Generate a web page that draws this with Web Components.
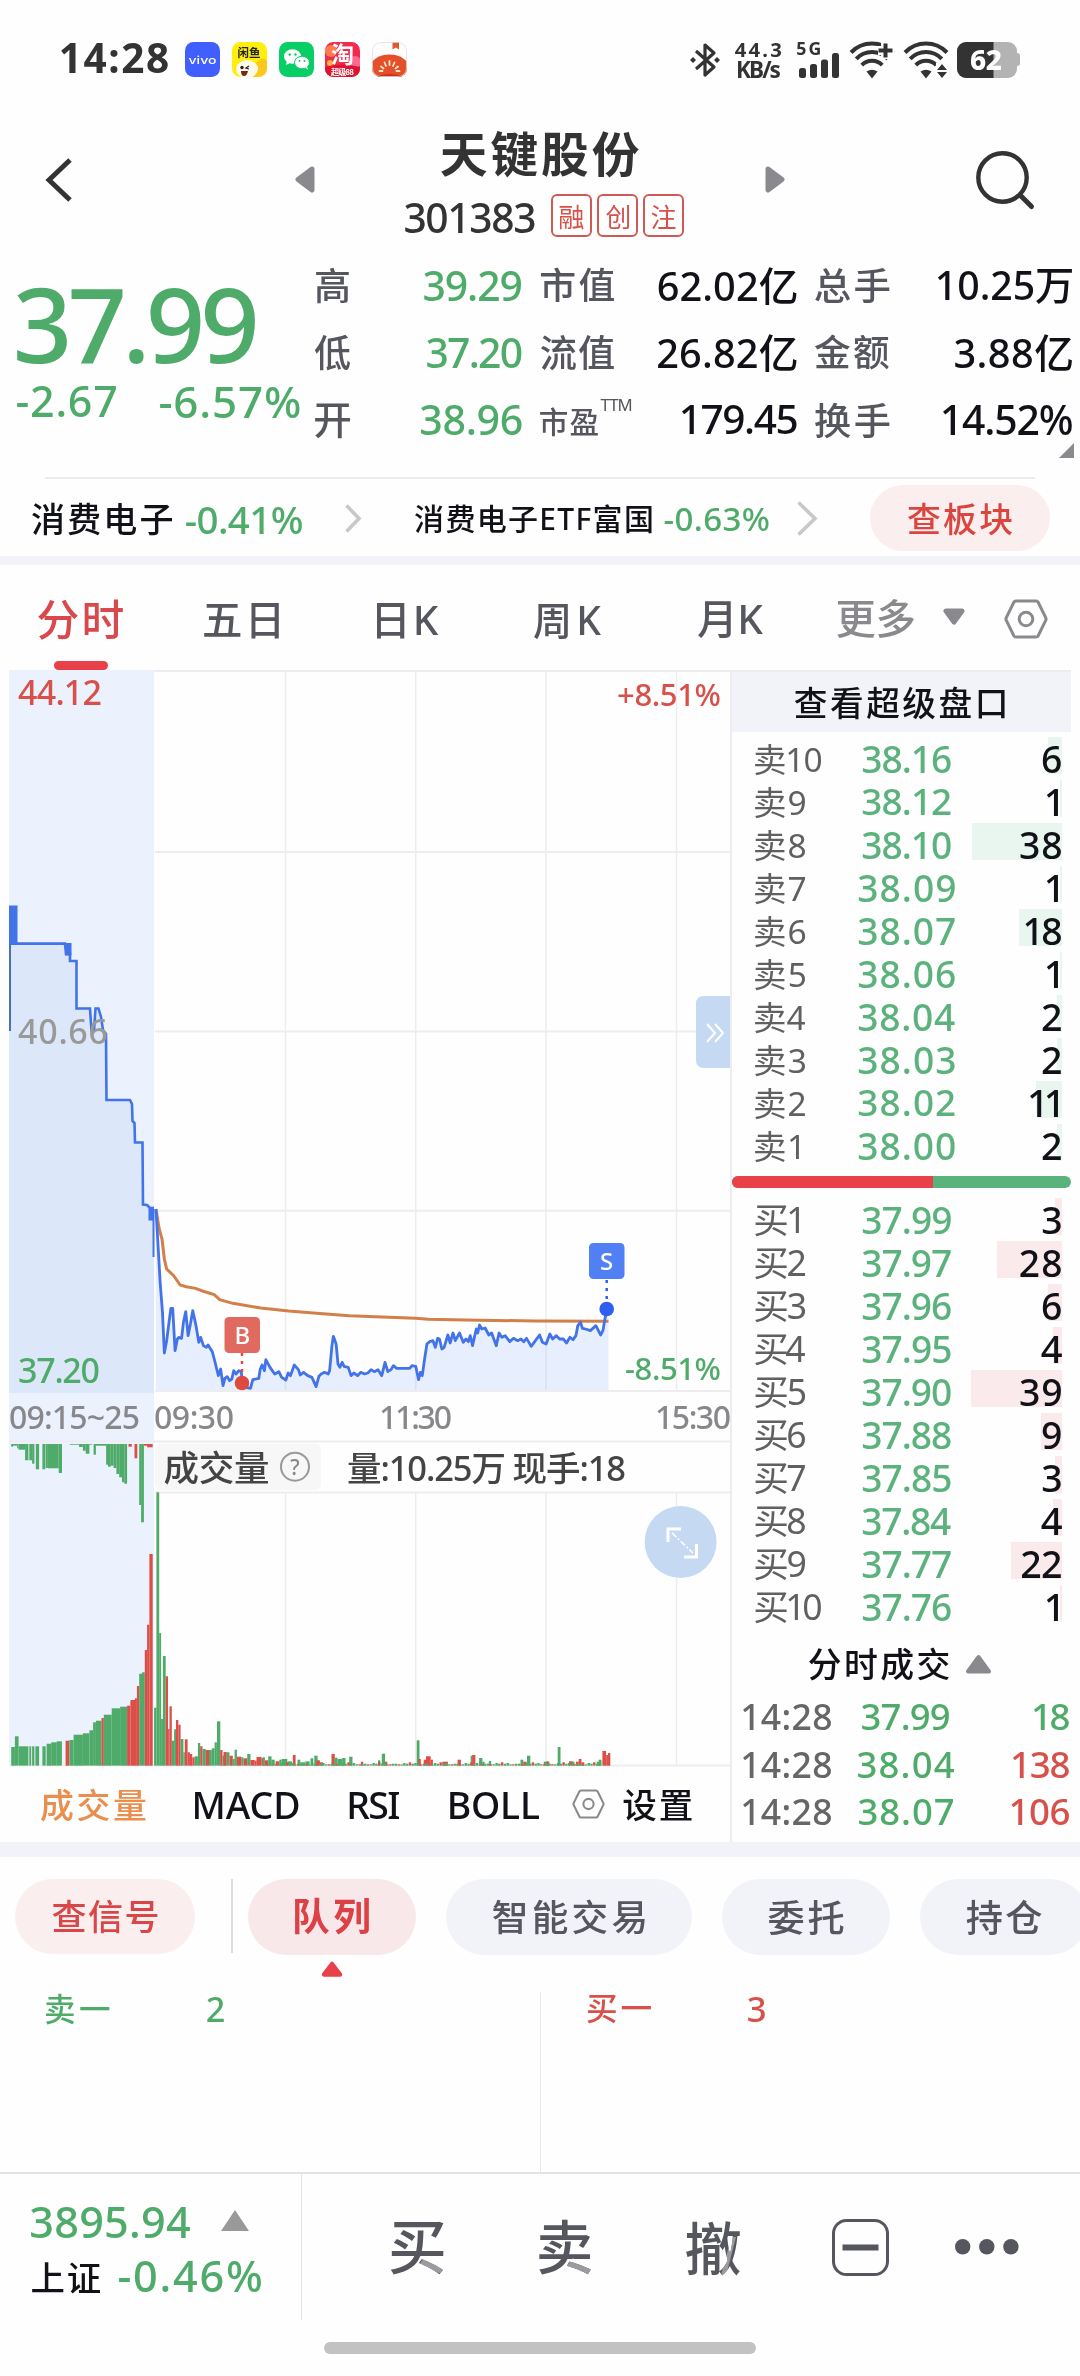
<!DOCTYPE html>
<html lang="zh-CN">
<head>
<meta charset="utf-8">
<title>天键股份 301383</title>
<style>
html,body{margin:0;padding:0;background:#fefefe}
body{width:1080px;height:2376px;overflow:hidden;font-family:"Noto Sans","Noto Sans CJK SC",sans-serif;font-weight:500;color:#333;
--up:#d8504a;--down:#4fab69;--ink:#111118;--label:#55565e;--band:#f2f3f8}
</style>
</head>
<body>
<quote-app></quote-app>
<script>
const FAM = '"Noto Sans","Noto Sans CJK SC",sans-serif';
const measure = document.createElement('canvas').getContext('2d');

/* Text whose box is exactly its ink: w and h give the size, spacing adapts. */
class InkText extends HTMLElement {
  connectedCallback() {
    if (this.shadowRoot) return;
    const w = +this.getAttribute('w'), h = +this.getAttribute('h');
    const wt = this.getAttribute('wt') || 500;
    const s = this.textContent, n = [...s].length;
    measure.font = `${wt} 200px ${FAM}`;
    const m = measure.measureText(s);
    const k = h / (m.actualBoundingBoxAscent + m.actualBoundingBoxDescent);
    const fs = 200 * k;
    const inkW = (m.actualBoundingBoxLeft + m.actualBoundingBoxRight) * k;
    const ls = n > 1 ? (w - inkW) / (n - 1) : 0;
    const base = h / 2 + (m.fontBoundingBoxAscent - m.fontBoundingBoxDescent) * k / 2;
    const up = h - m.actualBoundingBoxDescent * k - base;
    const left = m.actualBoundingBoxLeft * k + (n > 1 ? 0 : (w - inkW) / 2);
    this.attachShadow({mode: 'open'}).innerHTML = `<style>
      :host{display:block;flex:none;width:${w}px;height:${h}px;white-space:pre}
      span{display:block;width:max-content;height:${h}px;line-height:${h}px;font-family:${FAM};font-weight:${wt};font-size:${fs}px;
      letter-spacing:${ls}px;margin-left:${left}px;transform:translateY(${up}px)}
      </style><span><slot></slot></span>`;
  }
}
customElements.define('ink-text', InkText);

/* A flex row: items [text | html, x, y, w, h, style, weight]; gaps become margins. */
const row = (x0, y0, items) => {
  let x = x0;
  return items.map(([c, ix, iy, w, h, st = '', wt]) => {
    const m = `margin-left:${(ix - x).toFixed(1)}px;margin-top:${(iy - y0).toFixed(1)}px;${st}`;
    x = ix + w;
    return c[0] === '<'
      ? `<div style="flex:none;width:${w}px;height:${h}px;${m}">${c}</div>`
      : `<ink-text w="${w}" h="${h}" ${wt ? `wt="${wt}"` : ''} style="${m}">${c}</ink-text>`;
  }).join('');
};
const define = (name, css, html) => customElements.define(name, class extends HTMLElement {
  connectedCallback() {
    if (this.shadowRoot) return;
    this.attachShadow({mode: 'open'}).innerHTML =
      `<style>:host{display:block;box-sizing:border-box}*{box-sizing:border-box}svg{display:block;overflow:visible}.r{display:flex;align-items:flex-start}${css}</style>` +
      (typeof html === 'function' ? html(this) : html);
  }
});
const UP = 'color:var(--up)', DN = 'color:var(--down)', INK = 'color:var(--ink)', LB = 'color:var(--label)';

/* ---------- status bar ---------- */
const app = (bg, inner) => `<svg width="35" height="35" viewBox="0 0 35 35"><defs><clipPath id="c"><rect width="35" height="35" rx="8.5"/></clipPath></defs><g clip-path="url(#c)"><rect width="35" height="35" fill="${bg}"/>${inner}</g></svg>`;
const cjk = 'font-family="Noto Sans CJK SC"';
const icons = [
  app('#415fff', `<text x="17.5" y="21.5" font-family="Inter" font-size="11" font-weight="500" fill="#fff" text-anchor="middle" textLength="28" lengthAdjust="spacingAndGlyphs">vivo</text>`),
  app('#ffee0a', `<path d="M24 21q7-8 11-2v16H10l-7-7q3-6 9-4z" fill="#fdc81e"/><ellipse cx="15" cy="27" rx="11" ry="9" fill="#fffbe8"/><text x="17" y="15" ${cjk} font-size="11.5" font-weight="700" fill="#222" text-anchor="middle">闲鱼</text><circle cx="10" cy="25.500" r="1.700" fill="#222"/><path d="M17 24l-3 2 3 1" stroke="#222" stroke-width="1.300" fill="none"/><path d="M9 29h7q-1 5-4 5t-3-5z" fill="#7b2418"/>`),
  app('#07cf66', `<ellipse cx="13.500" cy="14.500" rx="8.500" ry="7.300" fill="#fff"/><path d="M8 19l-1 4 4-2z" fill="#fff"/><ellipse cx="23" cy="20.500" rx="7.500" ry="6.300" fill="#fff" stroke="#07cf66"/><path d="M26 25l3 3-1-4z" fill="#fff"/><g fill="#07cf66"><circle cx="10.700" cy="12.500" r="1.200"/><circle cx="16.500" cy="12.500" r="1.200"/><circle cx="20.500" cy="19" r="1"/><circle cx="25.500" cy="19" r="1"/></g>`),
  app('#f02b4d', `<circle cx="6" cy="9" r="6" fill="#ff7a4e"/><circle cx="30" cy="20" r="6" fill="#ff6a8e"/><circle cx="5" cy="21" r="3" fill="#ffb03a"/><path d="M0 25q17-5 35 0v10H0z" fill="#dc1430"/><text x="17.500" y="20.500" ${cjk} font-size="23" font-weight="700" fill="#fff" text-anchor="middle">淘</text><text x="17.500" y="33" ${cjk} font-size="8" font-weight="700" fill="#fff" text-anchor="middle" textLength="23">超级88</text>`),
  app('#fffefc', `<path d="M20.500 0h6.500v7.500l-3.200-2-3.300 2z" fill="#e0582f"/><ellipse cx="17.500" cy="27" rx="20" ry="14.500" fill="#e5502a"/><path d="M3 35q14-6 29 0z" fill="#c8301c"/><g stroke="#ffe8c8" stroke-width="1.800" stroke-linecap="round"><path d="M17.500 19v4M12.500 20.500l1.500 3.500M22.500 20.500l-1.500 3.500M9 24.500l2.500 2M26 24.500l-2.500 2M7.500 29h3M27.500 29h-3"/></g><rect x=".5" y=".5" width="34" height="34" rx="8" fill="none" stroke="#ddd" stroke-width=".8"/>`)];
const arcs = `<g fill="none" stroke="#333" stroke-width="4"><path d="M1 10.500a29 29 0 0 1 42 0"/><path d="M6.200 16.800a21.500 21.500 0 0 1 31.600 0"/><path d="M11.800 23.200a14 14 0 0 1 20.400 0"/></g><path d="M16.500 29.500q5.500-3.500 11 0l-5.500 7z" fill="#333"/>`;
define('status-bar', ':host{height:118px}.r{padding-top:42px}', `<div class="r">${row(0, 42, [
  ['14:28', 61, 44, 107, 30, '', 700],
  [icons[0], 185, 42, 35, 35], [icons[1], 232, 42, 35, 35], [icons[2], 278.5, 42, 35, 35], [icons[3], 325, 42, 35, 35], [icons[4], 372, 42, 35, 35],
  [`<svg width="30" height="36" viewBox="0 0 30 36"><path d="M6 9l18 16-9 8V3l9 8L6 27" fill="none" stroke="#333" stroke-width="3.200" stroke-linejoin="round"/><path d="M0 18l3-3 3 3-3 3zM24 18l3-3 3 3-3 3z" fill="#333"/></svg>`, 689.5, 42, 30, 36],
  [`<div><ink-text w="46" h="15" wt="700">44.3</ink-text><ink-text w="42" h="16.500" wt="700" style="margin:5.500px 0 0 3px">KB/s</ink-text></div>`, 735, 42.500, 46, 36],
  [`<div><ink-text w="23" h="13" wt="700">5G</ink-text></div>`, 797, 43, 23, 13],
  [`<svg width="40" height="26" viewBox="0 0 40 26" fill="#333"><rect y="16" width="7" height="10" rx="2.500"/><rect x="11" y="12" width="7" height="14" rx="2.500"/><rect x="22" y="7.500" width="7" height="18.500" rx="2.500"/><rect x="33" y="1" width="7" height="25" rx="2.500"/></svg>`, 799, 52, 40, 26],
  [`<svg width="44" height="36" viewBox="0 0 44 36">${arcs}<path d="M28 8.500h16M35.500 1v16" stroke="#fefefe" stroke-width="9"/><path d="M28.500 8.500h14M35.500 1.500v14" stroke="#333" stroke-width="4"/></svg>`, 849.5, 42, 44, 36],
  [`<svg width="44" height="36" viewBox="0 0 44 36">${arcs}<path d="M32 21h12v16H32z" fill="#fefefe"/><path d="M33 28l5-6 5 6zM33 30l5 6 5-6z" fill="#333"/></svg>`, 903.5, 42, 44, 36],
  [`<svg width="63" height="36" viewBox="0 0 63 36"><defs><clipPath id="b"><rect width="60" height="36" rx="9"/></clipPath></defs><rect x="57" y="11" width="6" height="13" rx="3" fill="#b3b3b3"/><g clip-path="url(#b)"><rect width="60" height="36" fill="#b3b3b3"/><rect width="36.500" height="36" fill="#333"/></g><text x="13" y="27.500" font-family="Noto Sans" font-size="28" font-weight="800" fill="#fff" textLength="32">62</text></svg>`, 957, 42, 63, 36],
])}</div>`);

/* ---------- header ---------- */
const badge = c => `<div class="bd"><ink-text w="24" h="24" wt="400">${c}</ink-text></div>`;
define('stock-header', `:host{height:144px;display:flex;align-items:flex-start}.c{width:233px;margin-left:90px}
.bd{width:41px;height:43px;border:2px solid #cf5a54;border-radius:6px;color:var(--up);padding:8.500px 0 0 6.500px}`, `
<svg width="27" height="44" viewBox="0 0 27 44" style="margin:40px 0 0 45px"><path d="M25 2L4 22l21 20" fill="none" stroke="#333" stroke-width="5"/></svg>
<svg width="20" height="27" viewBox="0 0 20 27" style="margin:48px 0 0 223px"><path d="M17 3L3 13.500 17 24z" fill="#8a8a8e" stroke="#8a8a8e" stroke-width="5" stroke-linejoin="round"/></svg>
<div class="c"><ink-text w="198" h="46" wt="700" style="margin:13px 0 0 36px">天键股份</ink-text>
<div class="r" style="margin-top:17px">${row(405, 194, [['301383', 405, 203, 129.5, 30, 'color:#333'], [badge('融'), 551, 194, 41, 43], [badge('创'), 597, 194, 41, 43], [badge('注'), 643, 194, 41, 43]])}</div></div>
<svg width="20" height="27" viewBox="0 0 20 27" style="margin:48px 0 0 127px"><path d="M3 3l14 10.500L3 24z" fill="#8a8a8e" stroke="#8a8a8e" stroke-width="5" stroke-linejoin="round"/></svg>
<svg width="58" height="58" viewBox="0 0 58 58" style="margin:33px 0 0 191px"><circle cx="26.500" cy="26.500" r="24.200" fill="none" stroke="#333" stroke-width="4.400"/><path d="M44 44l11.500 11.500" stroke="#333" stroke-width="5" stroke-linecap="round"/></svg>`);

/* ---------- quote ---------- */
define('quote-panel', `:host{height:217px;display:flex}.l{width:315px;padding-left:17px}.g{width:765px}.g .r{height:67px}
.tri{margin:-20px 0 0 744px;width:0;height:0;border-left:15px solid transparent;border-bottom:15px solid #8a8a8e}`, `
<div class="l"><ink-text w="238" h="77" style="${DN};margin-top:25px">37.99</ink-text>
<div class="r" style="margin-top:22px">${row(17, 386, [['-2.67', 17, 386, 99, 32, DN], ['-6.57%', 160, 386, 139.5, 32.500, DN]])}</div></div>
<div class="g">
<div class="r">${row(315, 262, [['高', 315, 268, 35, 35, LB], ['39.29', 424, 271, 97, 30.500, DN], ['市值', 541, 268, 73, 35, LB], ['62.02亿', 658.5, 267, 138, 37, INK], ['总手', 815, 268, 74.500, 35, LB], ['10.25万', 938, 269.5, 134, 34, INK]])}</div>
<div class="r">${row(315, 329, [['低', 315, 335, 35, 35, LB], ['37.20', 427, 338, 94.500, 30.500, DN], ['流值', 541, 335, 73, 35, LB], ['26.82亿', 658, 334, 138.500, 37, INK], ['金额', 815, 335, 74, 35, LB], ['3.88亿', 955, 334, 117, 37, INK]])}</div>
<div class="r">${row(315, 396, [['开', 315, 403.500, 35, 34, LB], ['38.96', 421, 405, 100.500, 30.500, DN], ['市盈', 540, 408, 58, 28, LB], ['TTM', 600.6, 400, 30.500, 12, LB, 400], ['179.45', 682, 405, 114.500, 30, INK], ['换手', 815, 403, 74.500, 35, LB], ['14.52%', 943, 405, 129, 30.500, INK]])}</div>
<div class="tri"></div></div>`);

/* ---------- sectors ---------- */
const chev = (w, h) => `<svg width="${w}" height="${h}" viewBox="0 0 ${w} ${h}"><path d="M1.500 1.500L${w - 3} ${h / 2} 1.500 ${h - 1.500}" fill="none" stroke="#c8c8cb" stroke-width="3.600"/></svg>`;
define('sector-row', `:host{height:79px}hr{height:2px;border:0;margin:-2px 45px 6px;background:#ececee}
.p{width:180px;height:66px;border-radius:33px;background:#fbeeee;padding:18px 0 0 38px}`, `<hr><div class="r">${row(0, 485, [
  ['消费电子', 32, 503, 140, 32, INK], ['-0.41%', 186, 506, 116, 28.500, DN], [chev(17, 29), 345, 504, 17, 29],
  ['消费电子ETF富国', 415, 505, 236.500, 28.500, INK], ['-0.63%', 664.7, 508, 104, 24.500, DN], [chev(21, 35), 797, 501, 21, 35],
  [`<div class="p"><ink-text w="104" h="32" style="color:#d94640">查板块</ink-text></div>`, 870, 485, 180, 66]])}</div>`);

const hex = (w, h, s) => `<svg width="${w}" height="${h}" viewBox="0 0 44 40"><path d="M12 2h20q1.500 0 2.200 1.300l7.600 15.500q.6 1.200 0 2.400l-7.600 15.500Q33.500 38 32 38H12q-1.500 0-2.200-1.300L2.200 21.200q-.6-1.200 0-2.400L9.800 3.300Q10.500 2 12 2z" fill="none" stroke="#8a8a8e" stroke-width="${s}"/><circle cx="22" cy="20" r="6.800" fill="none" stroke="#8a8a8e" stroke-width="${s}"/></svg>`;
define('chart-tabs', `:host{height:105px}i{display:block;width:54px;height:9px;border-radius:4.500px;background:#e9414a;margin:-9px 0 0 54px}.r{height:105px}`, `<div class="r">${row(0, 566, [
  ['分时', 38, 600.5, 85, 40, 'color:#d8484c'], ['五日', 204, 604, 75, 35, LB], ['日K', 377, 604, 61.500, 35, LB], ['周K', 534, 604, 67, 35, LB], ['月K', 698, 603, 65, 36, LB], ['更多', 837, 601, 77, 38, 'color:#8a8a8e'],
  [`<svg width="22" height="17" viewBox="0 0 22 17"><path d="M3 3h16l-8 11z" fill="#8a8a8e" stroke="#8a8a8e" stroke-width="5" stroke-linejoin="round"/></svg>`, 943, 609, 22, 17],
  [hex(44, 40, 3), 1004, 599.5, 44, 40]])}</div><i></i>`);

/* ---------- price chart ---------- */
const T = (s, x, y, w, fs, fill) => `<text x="${x}" y="${y}" font-size="${fs}" fill="${fill}" textLength="${w}">${s}</text>`;
const price = '335,540 344,760 349,850 353,972 358,935 363,880 367,838 371,838 376,965 381,930 384,925 390,928 394,880 399,848 404,920 409,885 414,845 421,890 427,940 431,925 437,950 443,955 447,948 456,968 462,1000 469,1040 474,1020 479,1070 483,1048 488,1043 493,1055 498,1050 502,1025 507,1035 513,1025 518,1028 521,1060 527,1075 538,1078 543,1052 556,1048 559,1020 563,1008 568,1025 571,992 580,1015 590,1035 599,1028 605,1045 614,1053 619,1032 624,1040 632,1008 641,1022 645,1038 652,1030 661,1040 670,1045 679,1073 685,1042 690,1035 697,1030 705,1035 708,1025 713,950 716,922 722,945 726,1005 730,1015 735,1000 739,1012 748,1015 754,1040 760,1032 768,1040 775,1030 783,1035 790,1032 797,1022 804,1028 812,1022 820,1040 827,1000 833,1028 840,1022 845,1010 852,1018 880,1018 885,1010 893,1012 899,1052 903,1030 907,1040 912,990 917,945 923,938 930,935 935,955 940,928 944,930 949,960 954,955 962,918 967,942 973,912 978,935 987,912 995,940 1001,930 1006,938 1010,920 1015,950 1023,900 1026,912 1030,888 1035,900 1042,897 1050,918 1056,912 1066,950 1072,912 1078,925 1085,920 1095,938 1103,928 1112,935 1119,930 1125,938 1131,928 1141,952 1150,935 1159,918 1165,940 1173,945 1181,915 1187,930 1195,920 1202,930 1210,930 1217,942 1224,925 1231,932 1237,920 1241,890 1247,880 1251,898 1258,900 1268,905 1280,890 1290,918 1295,905 1300,865 1303,850';
const avg = '335,540 342,600 348,630 353,690 358,720 373,740 387,768 400,773 420,778 435,786 460,797 472,812 500,823 560,837 620,846 680,853 750,860 820,864 893,868 920,871 1000,873 1150,876 1307,877';
const pre = '10,944.6 65,944.6 66,955 70,955 70,962 76.500,962 76.500,1009.500 90,1009.500 91.500,1032 94,1032 95.500,1009.500 98.500,1009.500 101,1018 103,1031 106,1035 106.500,1101 130,1101 132,1105 132.500,1122 134.500,1124 135,1143.500 142.500,1143.500 143,1205.500 147,1206 150,1209 154,1209';
const vgrid = (a, b) => [285.5, 415.7, 546, 676.5].map(x => `<path d="M${x} ${a}V${b}"/>`).join('');
define('price-chart', ':host{height:772px}', `<svg width="732" height="772" viewBox="0 671 732 772" font-family="Noto Sans" font-weight="500">
<rect x="9" y="671" width="145" height="772" fill="#ebf2fd"/>
<g stroke="#ededef" stroke-width="1.500"><path d="M154 672H732M155 853H731M155 1032.500H731M155 1211.700H731M155 1392H731M9 1442.500H731" stroke-width="2"/>${vgrid(673, 1392)}</g>
<polygon points="${pre} 154,1394 9,1394 9,944" fill="#dce7fa"/>
<g transform="translate(0 1030) scale(.46556 .33333)"><polygon points="${price} 1307,870 1307,1083 335,1083" fill="#5b8bff" fill-opacity=".14"/>
<polyline points="${avg}" fill="none" stroke="#d27f4a" stroke-width="3" vector-effect="non-scaling-stroke"/>
<polyline points="${price}" fill="none" stroke="#4273e8" stroke-width="2.800" stroke-linejoin="round" vector-effect="non-scaling-stroke"/></g>
<rect x="9" y="906.500" width="8.500" height="39" fill="#4273e8"/><path d="M10 944V1032" stroke="#4b6fb8" stroke-width="2"/>
<rect x="65" y="944" width="6.500" height="12.500" fill="#4273e8"/><rect x="148.500" y="1208" width="5" height="13.500" fill="#4273e8"/><path d="M153.500 1210V1258" stroke="#4273e8" stroke-width="2"/>
<polyline points="${pre}" fill="none" stroke="#4273e8" stroke-width="2.600"/>
${T('44.12', 18, 706, 84, 34, '#d8504a')}${T('+8.51%', 617, 706.5, 104, 31, '#d8504a')}${T('40.66', 18, 1045, 90, 34, '#999')}${T('37.20', 18, 1384, 82, 34, '#4fab69')}${T('-8.51%', 625, 1381, 96, 31, '#4fab69')}
${T('09:15~25', 9, 1429.5, 131, 32, '#88888c')}${T('09:30', 154, 1429.5, 80, 32, '#88888c')}${T('11:30', 379, 1429.5, 73, 32, '#88888c')}${T('15:30', 655, 1429.5, 76, 32, '#88888c')}
<path d="M242 1354V1378" stroke="#dc4a40" stroke-width="2.500" stroke-dasharray="3 5"/><circle cx="242" cy="1384" r="7.300" fill="#dc4a40"/>
<rect x="224.500" y="1318" width="35.500" height="36" rx="4.500" fill="#e06a60"/><text x="242.300" y="1344.500" font-size="24" fill="#fff" text-anchor="middle">B</text>
<path d="M606.700 1281V1304" stroke="#2e5ff0" stroke-width="2.500" stroke-dasharray="3 5"/><circle cx="606.700" cy="1310" r="7.300" fill="#2e5ff0"/>
<rect x="589" y="1244" width="35.500" height="36" rx="4.500" fill="#5080f4"/><text x="606.700" y="1270.500" font-size="24" fill="#fff" text-anchor="middle">S</text>
<path d="M732 997H704q-8 0-8 8v56q0 8 8 8h28z" fill="#c5daf2"/><path d="M707 1025l8 9-8 9M715 1025l8 9-8 9" fill="none" stroke="#fff" stroke-width="2"/>
</svg>`);

/* ---------- volume chart ---------- */
const G = '#4fab69', R = '#dc4e47', F = .46556;
const bars = (list, from) => list.map(([x, x2, y, c]) => { const a = 1420 + y / 3, b = 1420 + from / 3; return `<rect x="${(x * F).toFixed(1)}" y="${Math.min(a, b).toFixed(1)}" width="${((x2 - x) * F).toFixed(1)}" height="${Math.abs(a - b).toFixed(1)}" fill="${c || G}"/>`; }).join('');
const top1 = [[24,28,83],[28,37,80],[37,40,88],[40,54,92],[54,61,124],[63,69,124],[69,74,134],[77,84,151],[91,97,151],[98,103,147],[103,126,148],[126,133,162],[150,170,77],[170,178,84],[178,184,95],[184,192,104],[192,198,77],[201,206,107],[206,228,80],[228,232,137],[232,238,143],[238,244,140],[244,250,147],[250,256,165],[256,262,175],[262,267,190],[267,273,194],[276,283,83,R],[289,295,118,R],[299,303,258],[303,309,310],[309,316,80,R],[316,328,85,R]];
const pre1 = [[24,32,984],[32,40,952],[40,61,982],[63,67,982],[69,74,982],[76,84,982],[91,98,982],[100,110,974],[110,122,970],[122,133,967],[141,149,965,R],[149,158,963],[158,178,947],[178,192,943],[192,200,934],[200,206,910],[206,218,905],[218,223,897,R],[223,240,887],[240,258,868],[258,273,863],[273,280,860,R],[280,290,843,R],[290,294,838,R],[294,299,801,R],[299,305,764],[305,311,760],[311,316,693,R],[316,321,617,R],[321,328,405,R]];
const main = [[331,336,866],[336,342,220],[342,346,642],[346,350,900],[350,356,711],[356,361,772,R],[361,364,930,R],[364,369,862,R],[369,374,965],[374,378,931],[378,383,903,R],[383,388,917,R],[388,394,960],[394,397,1000],[397,403,961,R],[403,408,1000,R],[408,413,1005,R],[413,418,1015,R],[418,425,1012],[425,430,972],[430,435,982,R],[435,442,990],[442,449,993,R],[449,455,993],[455,461,988],[461,466,970],[466,473,907],[473,478,993,R],[478,483,1010],[480,487,999,R],[487,493,1000],[493,500,1010,R],[500,504,1020],[504,509,992],[509,518,1013,R],[518,523,1015],[523,531,1018,R],[531,538,1005],[538,547,1023,R],[547,551,1025,R],[551,562,1014,R],[562,567,1018,R],[564,569,1015],[569,576,1024,R],[576,583,1012],[583,590,1022],[592,600,1027,R],[600,605,1022],[605,617,1020],[618,627,1027],[629,635,1008,R],[639,645,1022],[645,656,1030],[656,665,1027],[667,673,1018],[675,682,1010],[680,687,1024,R],[687,694,1030,R],[712,719,1005,R],[719,725,1016],[725,735,1020],[735,742,1017],[750,757,1013],[775,780,1028,R],[812,817,1024],[820,827,1004],[827,832,1028,R],[895,901,964],[899,904,1020,R],[910,915,1022,R],[915,925,1012,R],[925,930,1022,R],[950,962,1028,R],[983,990,1022,R],[1011,1014,1010],[1014,1021,1008,R],[1029,1036,1017],[1036,1041,1028],[1050,1055,1026],[1118,1124,1022],[1124,1131,1028,R],[1132,1139,1010],[1168,1180,1028],[1174,1178,1027,R],[1198,1204,984],[1222,1230,1027,R],[1228,1234,1028],[1237,1243,1028,R],[1243,1249,1020,R],[1249,1255,1030,R],[1282,1288,1028],[1286,1292,1022],[1294,1302,996,R],[1302,1306,1008,R],[1306,1311,1002,R]];
const low = []; for (let i = 0, x = 566; x < 1290; x += 6, i++) { const k = (i * 7919 + i * i * 31) % 11; low.push([x, x + 5.2, 1036 - (k % 4) * 2, k % 5 < 2 ? G : R]); }
define('volume-chart', ':host{height:324px}', `<svg width="732" height="324" viewBox="0 1443 732 324">
<rect x="9" y="1443" width="145" height="324" fill="#ebf2fd"/>
<g stroke="#ededef" stroke-width="1.500"><path d="M155 1493.500H731M9 1766.500H731" stroke-width="2"/>${vgrid(1494, 1766)}</g>
${bars(top1, 75)}${bars(pre1, 1040)}${bars(main, 1040)}${bars(low, 1040)}
<rect x="155" y="1444.500" width="166" height="46.500" rx="6" fill="#f7f7f8"/>
<g fill="#444" font-family="Noto Sans, Noto Sans CJK SC" font-weight="500"><text x="163.500" y="1482" font-size="35.500" textLength="106">成交量</text><text x="347" y="1482" font-size="34.500" textLength="279">量:10.25万 现手:18</text></g>
<circle cx="295" cy="1467.700" r="14" fill="none" stroke="#999" stroke-width="2"/><text x="295" y="1475.500" font-family="Noto Sans" font-size="21" fill="#888" text-anchor="middle">?</text>
<circle cx="680.600" cy="1543" r="36" fill="#c5daf2"/><path d="M681 1530H668V1543M684 1558H696.500V1545" fill="none" stroke="#fff" stroke-width="3"/><path d="M672 1534l21 20" stroke="#fff" stroke-width="1.500" stroke-dasharray="6 2 2 2"/>
</svg>`);
define('indicator-tabs', ':host{height:76px}', `<div class="r">${row(0, 1767, [
  ['成交量', 41, 1790, 104.500, 32.500, 'color:#e98e4d'], ['MACD', 195, 1793, 103.500, 27.500, INK], ['RSI', 349.5, 1793, 49.500, 27.500, INK], ['BOLL', 450, 1793, 89, 27.500, INK],
  [hex(33, 30, 2.800), 572, 1790, 33, 30], ['设置', 623.5, 1791, 68, 32, INK]])}</div>`);

/* ---------- order book ---------- */
const qw = q => ({1: 11, 11: 28, 18: 35.5, 22: 39})[q] || (q > 9 ? 40.5 : 18.5);
define('book-row', `:host{display:flex;height:43px;width:341px;align-items:flex-start;padding-top:9px}
.p{flex:none;width:120px;display:flex;justify-content:center}
.q{margin-left:auto;margin-right:12px;position:relative;height:27px}
b{position:absolute;right:-1px;top:-9px;height:37px}.q ink-text{position:relative}`, el => {
  const [n, p, q, bw] = ['n', 'p', 'q', 'b'].map(a => el.getAttribute(a)), buy = n[0] === '买';
  const pw = p.startsWith('38.0') ? 96 : 88, lw = n.length > 2 ? 66 : /1$/.test(n) ? 44 : 50;
  return `<ink-text w="${lw}" h="31" wt="400" style="margin:-2px 0 0 23px;color:#606060">${n}</ink-text>
  <div class="p" style="margin-left:${91.7 - lw}px"><ink-text w="${pw}" h="27.500" style="color:#5cb27c">${p}</ink-text></div>
  <div class="q"><b style="width:${bw}px;background:${buy ? '#faeaec' : '#e9f6f0'}"></b><ink-text w="${qw(q)}" h="27.500" style="${INK};margin-right:${q.endsWith('1') ? 3 : 0}px">${q}</ink-text></div>`;
});
const sell = [[10,'38.16',6,14],[9,'38.12',1,2],[8,'38.10',38,90],[7,'38.09',1,2],[6,'38.07',18,43],[5,'38.06',1,2],[4,'38.04',2,5],[3,'38.03',2,5],[2,'38.02',11,26],[1,'38.00',2,5]];
const buy = [[1,'37.99',3,7],[2,'37.97',28,65],[3,'37.96',6,14],[4,'37.95',4,9],[5,'37.90',39,91],[6,'37.88',9,21],[7,'37.85',3,7],[8,'37.84',4,9],[9,'37.77',22,51],[10,'37.76',1,2]];
const br = (s, l) => l.map(([n, p, q, b]) => `<book-row n="${s}${n}" p="${p}" q="${q}" b="${b}"></book-row>`).join('');
const tick = (p, px, pw, q, qx, c) => `<div class="r k">${row(732, 0, [['14:28', 743, 0, 88, 26.500, 'color:#666'], [p, px, 0, pw, 27, DN], [q, qx, 0, 1069 - qx, 27, c]])}</div>`;
define('order-book', `:host{width:350px;border-left:2px solid #ededef;height:1172px}
.h{width:339px;height:62px;background:var(--band);padding:15px 0 0 62.700px;border-top:2px solid #ededef;margin-bottom:4.500px}
.bar{display:flex;width:339px;height:12px;margin:9.500px 0;border-radius:6px;overflow:hidden;background:#5ab37b}.bar i{width:201px;background:#e9414a}
.k{height:47.700px}`, `<div class="h"><ink-text w="210" h="32" style="${INK}">查看超级盘口</ink-text></div>
${br('卖', sell)}<div class="bar"><i></i></div>${br('买', buy)}
<div class="r" style="height:76.500px">${row(732, 1628.5, [['分时成交', 809, 1649, 140, 32.500, INK], [`<svg width="27" height="20" viewBox="0 0 27 20"><path d="M3 17.500h21L13.500 3z" fill="#8a8a8e" stroke="#8a8a8e" stroke-width="4" stroke-linejoin="round"/></svg>`, 965, 1655, 27, 20]])}</div>
${tick('37.99', 862, 87, '18', 1034, DN)}${tick('38.04', 858, 96, '138', 1013, UP)}${tick('38.07', 859, 94, '106', 1011.5, UP)}`);

/* ---------- queue ---------- */
const pill = (s, w, h, tw, th, bg, c, wt = 500) => `<div style="width:${w}px;height:${h}px;border-radius:${h / 2}px;background:${bg};display:flex;align-items:center;justify-content:center;color:${c}"><ink-text w="${tw}" h="${th}" wt="${wt}">${s}</ink-text></div>`;
define('queue-panel', `:host{height:315.500px;overflow:hidden}.a{padding-top:22.500px;height:135.500px}.b{height:180px}.b>div{width:540px;height:180px}.b>div+div{border-left:1px solid #e8e8ea}`, `
<div class="r a">${row(0, 1880, [
  [pill('查信号', 180, 75, 105, 33, '#fbeeee', '#d94648'), 15, 1880, 180, 75],
  ['<div style="width:2px;height:74px;background:#dcdcde"></div>', 231, 1880, 2, 74],
  [pill('队列', 168, 76, 74, 36, '#f9e8ea', '#dd4148', 700), 248, 1880, 168, 76],
  [pill('智能交易', 246, 76, 152, 35, 'var(--band)', 'var(--label)'), 446, 1880, 246, 76],
  [pill('委托', 168, 76, 75, 35, 'var(--band)', 'var(--label)'), 722, 1880, 168, 76],
  [pill('持仓', 168, 76, 75, 35, 'var(--band)', 'var(--label)'), 920, 1880, 168, 76]])}</div>
<svg width="22" height="16" viewBox="0 0 22 16" style="margin:-31px 0 15px 320.500px"><path d="M3 13.500h16L11 3z" fill="#e9414a" stroke="#e9414a" stroke-width="4.500" stroke-linejoin="round"/></svg>
<div class="r b"><div class="r">${row(0, 1993, [['卖一', 46, 1994.5, 63.500, 29.500, DN], ['2', 207, 1997.5, 17, 25, DN]])}</div>
<div class="r">${row(541, 1993, [['买一', 587.5, 1996, 63.500, 28, UP], ['3', 748, 1997.5, 17, 25.500, UP]])}</div></div>`);

/* ---------- bottom bar ---------- */
const act = (s, h) => `<div style="position:relative"><ink-text w="52" h="${h}" wt="500" style="${LB}">${s}</ink-text><i style="position:absolute;${s === '撤' ? 'right:3px;bottom:0;width:15px;height:38px;clip-path:polygon(70% 0,100% 0,35% 100%,0 100%)' : 'right:0;bottom:0;width:26px;height:17px;clip-path:polygon(30% 0,100% 50%,100% 100%,0 60%)'};background:#9a9aa0;mix-blend-mode:lighten"></i></div>`;
define('bottom-bar', `:host{height:203px;border-top:2px solid #e2e3e6;background:#fefefe}.m{height:146px}.ix{width:302px;height:146px;border-right:1.500px solid #e2e3e6}
.home{width:432px;height:12px;border-radius:6px;background:#c2c2c2;margin:22px auto 0}`, `
<div class="r m"><div class="ix"><div class="r">${row(0, 2175, [['3895.94', 31, 2208, 159, 32, DN], ['<svg width="30" height="22"><path d="M1 21L15 0l14 21z" fill="#999"/></svg>', 220, 2211, 30, 22]])}</div>
<div class="r" style="margin-top:21.500px">${row(0, 2262, [['上证', 32, 2263, 68, 31, INK], ['-0.46%', 119, 2262, 142, 32, DN]])}</div></div>
${row(302, 2175, [[act('买', 52), 391, 2223, 52, 52], [act('卖', 54), 539, 2222, 52, 54], [act('撤', 54), 687, 2222, 52, 54],
  ['<svg width="57" height="57"><rect x="1.500" y="1.500" width="54" height="54" rx="13" fill="none" stroke="#55565e" stroke-width="3"/><path d="M10.500 28.500h36" stroke="#55565e" stroke-width="6"/></svg>', 832, 2220, 57, 57],
  ['<svg width="64" height="16" fill="#55565e"><circle cx="7.700" cy="7.700" r="7.700"/><circle cx="31.800" cy="7.700" r="7.700"/><circle cx="55.900" cy="7.700" r="7.700"/></svg>', 955, 2240, 64, 16]])}</div>
<div class="home"></div>`);

define('quote-app', `:host{width:1080px;height:2376px;overflow:hidden}.band{background:var(--band)}.mid{display:flex;height:1172px}.mid>div{width:730px;flex:none}`, `
<status-bar></status-bar><stock-header></stock-header><quote-panel></quote-panel><sector-row></sector-row>
<div class="band" style="height:9px"></div>
<chart-tabs></chart-tabs>
<div class="mid"><div><price-chart></price-chart><volume-chart></volume-chart><indicator-tabs></indicator-tabs></div><order-book></order-book></div>
<div class="band" style="height:14.500px"></div>
<queue-panel></queue-panel><bottom-bar></bottom-bar>`);
</script>
</body>
</html>
